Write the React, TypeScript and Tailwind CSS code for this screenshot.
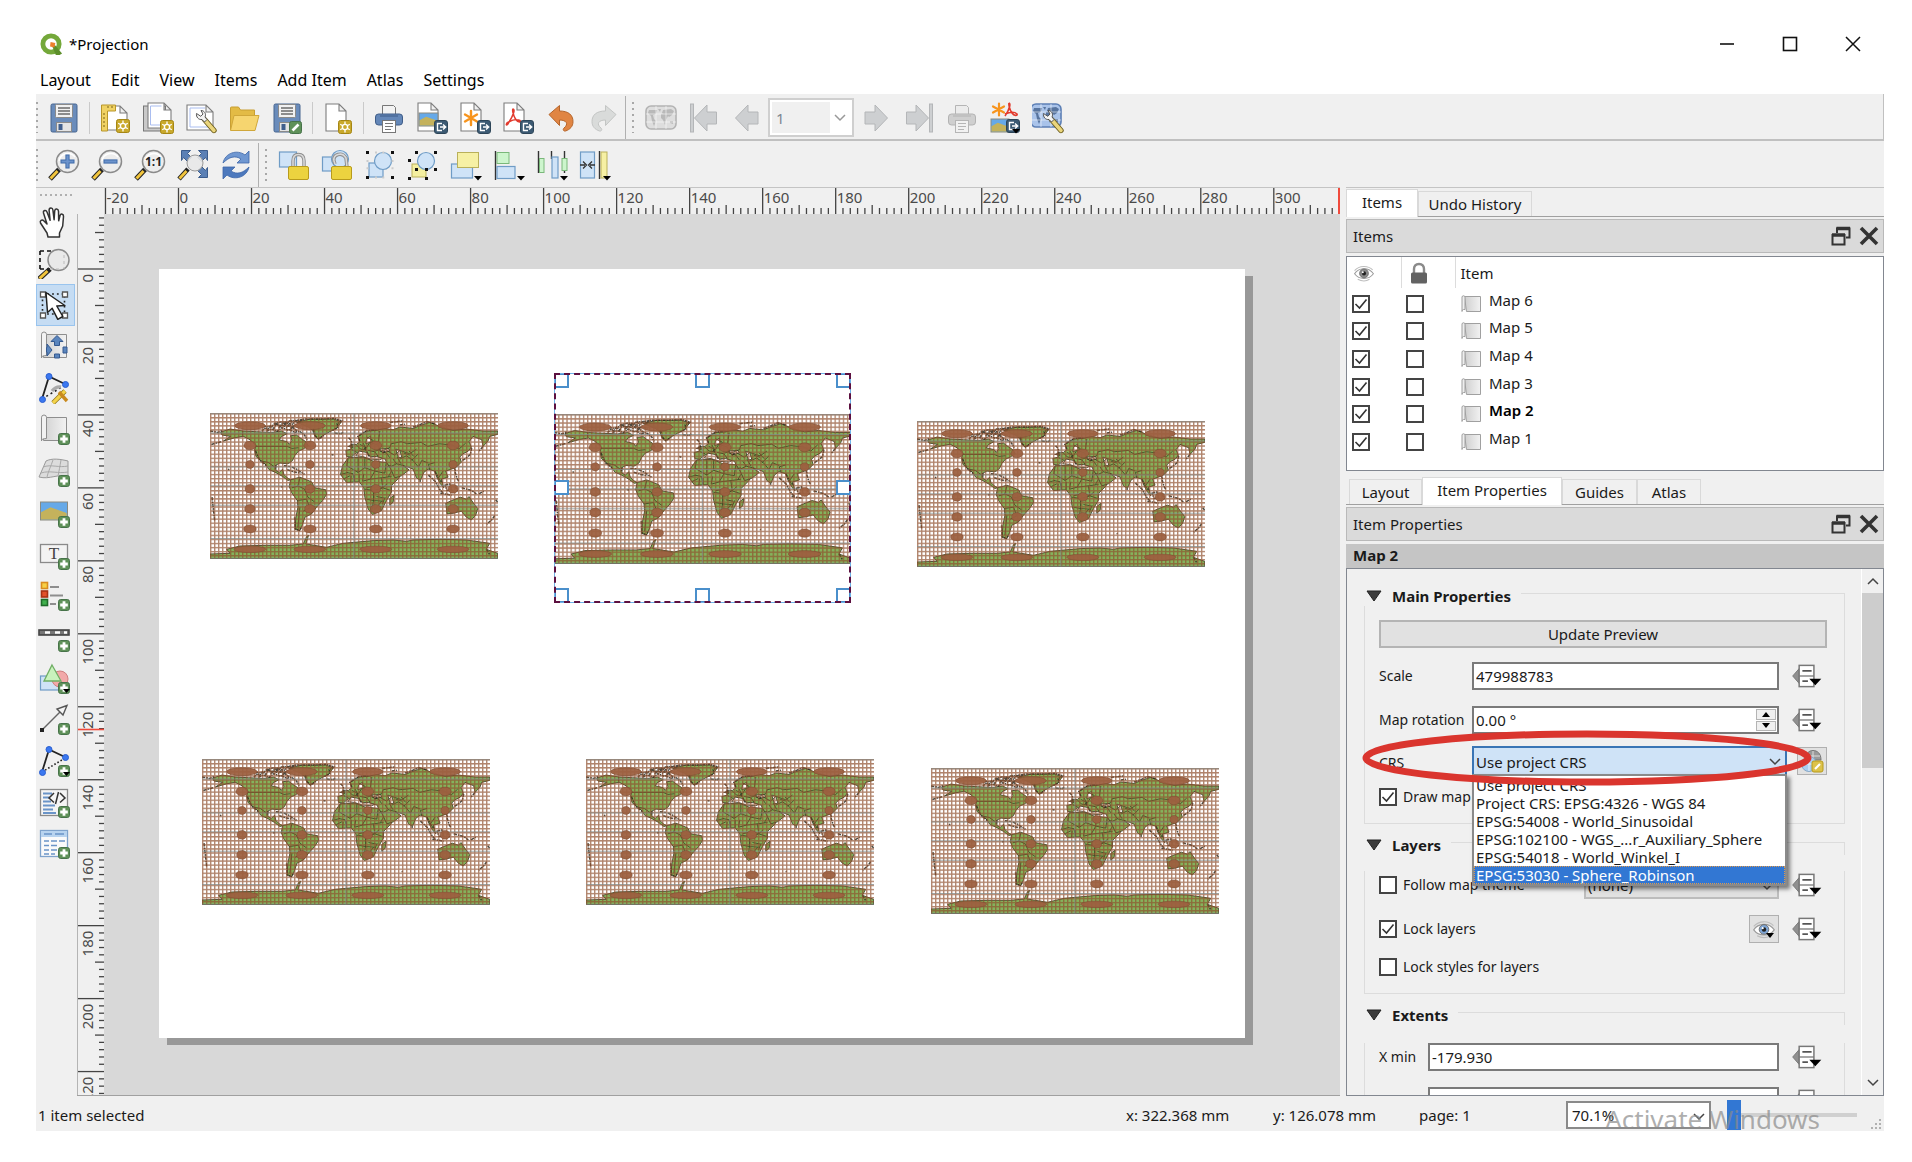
import React, { useState } from "react";

/* ---------- icon primitives ---------- */

type Kids = { children: React.ReactNode };

function Ico({ children }: Kids) {
  return (
    <svg viewBox="0 0 32 32" className="size-8" fill="none" aria-hidden="true">
      {children}
    </svg>
  );
}

const Badge = ({ x = 17, y = 18 }: { x?: number; y?: number }) => (
  <g>
    <rect x={x + 0.5} y={y + 0.5} width="13" height="13" rx="2" fill="#c9a92c" stroke="#a58614" />
    <circle cx={x + 7} cy={y + 7} r="2.6" stroke="#fff" strokeWidth="1.4" />
    <path d={`M${x + 7} ${y + 1.5}v3M${x + 7} ${y + 9.5}v3M${x + 2.2} ${y + 4.2}l2.6 1.5M${x + 9.2} ${y + 8.3}l2.6 1.5M${x + 2.2} ${y + 9.8}l2.6-1.5M${x + 9.2} ${y + 5.7}l2.6-1.5`} stroke="#fff" strokeWidth="1.3" />
  </g>
);

const Plus = ({ arrow, x = 19, y = 19 }: { arrow?: boolean; x?: number; y?: number }) => (
  <g>
    <rect x={x + 0.5} y={y + 0.5} width="11" height="11" rx="2.2" fill="#5f9159" stroke="#47734a" />
    <path d={`M${x + 6} ${y + 2.2}v7.6M${x + 2.2} ${y + 6}h7.6`} stroke="#fff" strokeWidth="2.8" />
    {arrow && <path d={`M${x + 5} ${y + 7}h7l-3.5 4z`} fill="#000" />}
  </g>
);

const ExportBadge = ({ x = 18, y = 18 }: { x?: number; y?: number }) => (
  <g>
    <rect x={x + 0.5} y={y + 0.5} width="13" height="13" rx="2.4" fill="#3c5a73" stroke="#2d4558" />
    <path d={`M${x + 8} ${y + 3.5}h-4.5v7h4.5M${x + 6} ${y + 7}h5.5M${x + 9} ${y + 4.5}l2.7 2.5-2.7 2.5`} stroke="#fff" strokeWidth="1.4" />
  </g>
);

const Doc = ({ x = 5, y = 1, w = 20, h = 28 }: { x?: number; y?: number; w?: number; h?: number }) => (
  <path d={`M${x} ${y}h${w - 7}l7 7v${h - 7}h${-w}zM${x + w - 7} ${y}v7h7`} fill="#fff" stroke="#7d7d7d" strokeWidth="1.1" />
);

const Floppy = () => (
  <g>
    <path d="M3 3.500q0-1.500 1.500-1.500h23q1.500 0 1.500 1.500v25q0 1.500-1.500 1.500h-23q-1.500 0-1.500-1.500z" fill="#6a8cbb" stroke="#47648e" />
    <rect x="7.500" y="2.500" width="17" height="13" rx="1" fill="#f1f1f1" stroke="#8a8a8a" />
    <path d="M10 6h12M10 9h12M10 12h12" stroke="#6b6b6b" strokeWidth="1.400" />
    <rect x="8.500" y="20.500" width="15" height="9" fill="#e4e4e4" stroke="#8a8a8a" />
    <rect x="10.500" y="22" width="4" height="6" fill="#3f5e8d" />
  </g>
);

const Wrench = ({ x = 0, y = 0 }: { x?: number; y?: number }) => (
  <g transform={`translate(${x} ${y})`}>
    <path d="M17.500 16.500l9.500 11" stroke="#6b5c1c" strokeWidth="5.400" strokeLinecap="round" />
    <path d="M17.500 16.500l9.500 11" stroke="#ead57c" strokeWidth="3.600" strokeLinecap="round" />
    <path d="M9.500 10.500c-.5 3.500 2 6.500 5.500 6l2.500 2.500 2.500-2.500-2-2.500c1.500-3-.5-6.500-4-6.500l2 3.500-2.200 2.300z" fill="#f4f4f4" stroke="#555" />
  </g>
);

const Printer = ({ dim }: { dim?: boolean }) => {
  const b = dim ? "#cfcfcf" : "#6487b8";
  const s = dim ? "#b3b3b3" : "#3f5d88";
  const p = dim ? "#b5b5b5" : "#777";
  return (
    <g>
      <path d="M9.500 12v-8.500h11l2 2v6.500" fill={dim ? "#ececec" : "#f3f3f3"} stroke={p} />
      <rect x="2.500" y="12" width="27" height="11" rx="3" fill={b} stroke={s} />
      <path d="M7 14h18" stroke={s} />
      <rect x="9.500" y="18.500" width="13" height="12" fill={dim ? "#f1f1f1" : "#fff"} stroke={p} />
      <path d="M12 21.500h8M12 24.500h8M12 27.500h6" stroke={p} />
    </g>
  );
};

const Lens = ({ children }: { children?: React.ReactNode }) => (
  <g>
    <path d="M2 30l9-9.500" stroke="#222" strokeWidth="5" />
    <path d="M2.500 29.500l7-7.500" stroke="#f2c53d" strokeWidth="3" />
    <circle cx="19.500" cy="12.500" r="11" fill="#ededed" stroke="#8b8b8b" strokeWidth="1.500" />
    <path d="M11 12a9 9 0 0 1 16-4" stroke="#fff" strokeWidth="1.500" />
    {children}
  </g>
);

const Landscape = ({ x, y, w, h }: { x: number; y: number; w: number; h: number }) => (
  <g>
    <rect x={x} y={y} width={w} height={h} fill="#66a9e8" stroke="#8a8a80" />
    <path d={`M${x + 0.5} ${y + h - 0.5}v${-h * 0.4}l${w * 0.35} ${-h * 0.28} ${w * 0.6} ${h * 0.32}v${h * 0.36}z`} fill="#c4b25c" />
  </g>
);

const Scroll = () => (
  <g>
    <path d="M3.500 4.500h25v23h-23z" fill="url(#paper)" stroke="#8e8e8e" />
    <path d="M3.500 4.500q0-2.500 2.500-2.500t2.500 2.500v21q-5 0-5 2.500z" fill="#f2f2f2" stroke="#8e8e8e" />
  </g>
);

const Blue = { fill: "#cfe3f7", stroke: "#6f9cc6", strokeWidth: 1.2 };
const Corner = ({ d, c = "#111" }: { d: string; c?: string }) => <path d={d} stroke={c} strokeWidth="2" strokeDasharray="2 5.300" />;
const Down = ({ x = 22, y = 27 }: { x?: number; y?: number }) => <path d={`M${x} ${y}h8l-4 4.500z`} fill="#000" />;

const Nodes = ({ dots }: { dots?: boolean }) => (
  <g>
    <path d="M4 27L11 4.500 28 12.500" stroke="#222" strokeWidth="1.800" />
    <path d="M4 27L28 12.500" stroke="#222" strokeWidth="1.600" strokeDasharray={dots ? "1.600 2" : "2 3"} />
    <g fill="#3b78f0" stroke="#2b5fd0">
      <circle cx="4.500" cy="27.500" r="3" />
      <circle cx="11" cy="4.500" r="3" />
      <circle cx="27.500" cy="12.500" r="3" />
    </g>
  </g>
);

const ArrowL = ({ flip, bar }: { flip?: boolean; bar?: boolean }) => (
  <g transform={flip ? "translate(32 0) scale(-1 1)" : undefined} fill="#cdcfd1" stroke="#b4b6b8">
    <path d={bar ? "M6.500 16L19 3v7h9.500v12h-9.500v7z" : "M4.500 16L17 3v7h10v12h-10v7z"} />
    {bar && <rect x="2.500" y="2" width="3" height="28" />}
  </g>
);

const MiniMap = ({ fill, land, stroke }: { fill: string; land: string; stroke: string }) => (
  <g>
    <rect x="1" y="4" width="30" height="23" rx="5" fill={fill} stroke={stroke} strokeWidth="1.600" />
    <path d="M4 8h8l-1 4-3 1 1 4 2 2-2 5-2-5-1-5-3-3zM13 7h3l-1 3zM16 12l4-1 3 3-2 4-1 5-2-5-2-2zM18 8l8-1 3 2-2 4-3 2-3-3-4-1zM25 19l3 0v3l-3-1z" fill={land} />
    <path d="M11 4v23M21 4v23M1 12h30M1 20h30" stroke="#fff" strokeOpacity=".55" />
  </g>
);

/* ---------- toolbar definitions ---------- */

type Tool = { label: string; art: React.ReactNode };

const fileTools: Tool[][] = [
  [{ label: "Save Project", art: <Floppy /> }],
  [
    {
      label: "New Layout",
      art: (
        <>
          <Doc x={4} y={4} w={24} h={24} />
          <path d="M2.500 3v26h6v-20h8v-6z" fill="#f0d264" stroke="#b8962a" />
          <path d="M4 12h2M4 16h2M4 20h2M4 24h2M9 4v2M13 4v2" stroke="#7a6216" />
          <Badge x={17} y={17} />
        </>
      ),
    },
    {
      label: "Duplicate Layout",
      art: (
        <>
          <rect x="1.500" y="4" width="22" height="25" fill="#c9c9c9" stroke="#777" />
          <Doc x={6} y={1} w={23} h={25} />
          <path d="M8.500 4h11M8.500 4v19h17" stroke="#a9bdf0" />
          <Badge x={18} y={18} />
        </>
      ),
    },
    {
      label: "Layout Manager",
      art: (
        <>
          <Doc x={2} y={3} w={26} h={25} />
          <path d="M5 6h15M5 6v19h20" stroke="#a9bdf0" />
          <Wrench x={2} y={1} />
        </>
      ),
    },
    {
      label: "Add Items from Template",
      art: (
        <>
          <path d="M2.500 28v-22q0-1 1-1h7l2 3h14v5" fill="#e3bb45" stroke="#c89f33" />
          <path d="M2.500 28.500l3.500-15h25l-4 15z" fill="#f6d56f" stroke="#d0a73a" />
        </>
      ),
    },
    {
      label: "Save as Template",
      art: (
        <>
          <Floppy />
          <rect x="18.500" y="19.500" width="12" height="12" rx="2" fill="#5f9159" stroke="#47734a" />
          <path d="M21.500 28.500l6-6" stroke="#fff" strokeWidth="2.600" />
        </>
      ),
    },
  ],
  [
    {
      label: "Add Pages",
      art: (
        <>
          <Doc x={4} y={2} w={20} h={27} />
          <Badge x={16} y={18} />
        </>
      ),
    },
  ],
  [
    { label: "Print Layout", art: <Printer /> },
    {
      label: "Export as Image",
      art: (
        <>
          <Doc x={2} y={1} w={20} h={28} />
          <Landscape x={3} y={11} w={19} h={13} />
          <ExportBadge />
        </>
      ),
    },
    {
      label: "Export as SVG",
      art: (
        <>
          <Doc x={2} y={1} w={20} h={28} />
          <path d="M12 9v14M6 12.500l12 7M18 12.500l-12 7" stroke="#f7941d" strokeWidth="2.400" strokeLinecap="round" />
          <ExportBadge />
        </>
      ),
    },
    {
      label: "Export as PDF",
      art: (
        <>
          <Doc x={2} y={1} w={20} h={28} />
          <path d="M11 7c2 0 1.500 5-5.500 15.500-1.500 1.500-2-1 1-2.500 5-2.500 9-3 11.500-1.500 2.500 2-2 2.500-4.500-1.500-2.500-4-3.500-10-2.500-10z" stroke="#e23b2e" strokeWidth="1.500" />
          <ExportBadge />
        </>
      ),
    },
    {
      label: "Undo",
      art: <path d="M4 12.500L14.500 3.500v5.500c9 0 13.500 4 13.500 10.500 0 5-3 8-7.500 9.500-2 .5-3-1.500-1.500-3 5-4 2.500-8-4.500-8v5.500z" fill="#e08543" stroke="#b5652b" />,
    },
    {
      label: "Redo",
      art: <path d="M28 12.500L17.500 3.500v5.500c-9 0-13.500 4-13.500 10.500 0 5 3 8 7.500 9.500 2 .5 3-1.500 1.500-3-5-4-2.500-8 4.500-8v5.500z" fill="#d9dbda" stroke="#c3c5c4" />,
    },
  ],
];

const atlasBefore: Tool[] = [
  { label: "Preview Atlas", art: <MiniMap fill="#dedede" land="#b9b9b9" stroke="#b3b3b3" /> },
  { label: "First Feature", art: <ArrowL bar /> },
  { label: "Previous Feature", art: <ArrowL /> },
];
const atlasAfter: Tool[] = [
  { label: "Next Feature", art: <ArrowL flip /> },
  { label: "Last Feature", art: <ArrowL flip bar /> },
  { label: "Print Atlas", art: <Printer dim /> },
  {
    label: "Export Atlas",
    art: (
      <>
        <path d="M10 1.500v12M4 4.500l11 6M15 4.500l-11 6" stroke="#f7941d" strokeWidth="2.200" strokeLinecap="round" />
        <path d="M20 1c1.500 0 1.500 5-4 13M16 12c5-2 10-2 12 0 1 2-3 2-5-1-2.500-3-3.500-9-3-10" stroke="#e23b2e" strokeWidth="1.600" />
        <Landscape x={2} y={17} w={18} h={13} />
        <ExportBadge x={17} y={17} />
        <path d="M23 27h8l-4 4.500z" fill="#000" />
      </>
    ),
  },
  {
    label: "Atlas Settings",
    art: (
      <>
        <g transform="translate(-2 -2)">
          <MiniMap fill="#a9c3ea" land="#57749f" stroke="#5c7fb5" />
        </g>
        <Wrench x={2} y={1} />
      </>
    ),
  },
];

const zoomTools: Tool[] = [
  {
    label: "Zoom In",
    art: (
      <Lens>
        <path d="M19.500 5.500v14M12.500 12.500h14" stroke="#3f6aa8" strokeWidth="4.200" />
        <path d="M19.500 6.500v12M13.500 12.500h12" stroke="#6c93cc" strokeWidth="2.200" />
      </Lens>
    ),
  },
  {
    label: "Zoom Out",
    art: (
      <Lens>
        <path d="M12.500 12.500h14" stroke="#3f6aa8" strokeWidth="4.200" />
        <path d="M13.500 12.500h12" stroke="#6c93cc" strokeWidth="2.200" />
      </Lens>
    ),
  },
  {
    label: "Zoom to 100%",
    art: (
      <Lens>
        <text x="19.500" y="17" textAnchor="middle" fill="#222" className="font-['Open_Sans'] text-[12px] font-bold">1:1</text>
      </Lens>
    ),
  },
  {
    label: "Zoom Full",
    art: (
      <>
        <g fill="#5b80b5" stroke="#3b5c8c">
          <path d="M4.500 1.500h9l-3 3 4 4-4 4-4-4-2 3zM30.500 1.500h-9l3 3-4 4 4 4 4-4 2 3zM30.500 28.500h-9l3-3-4-4 4-4 4 4 2-3z" />
        </g>
        <path d="M2 30l9-10" stroke="#222" strokeWidth="4.600" />
        <path d="M2.500 29.500l7-7.500" stroke="#f2c53d" strokeWidth="2.800" />
        <circle cx="18" cy="14" r="8" fill="#e8e8e8" fillOpacity=".9" stroke="#999" />
      </>
    ),
  },
  {
    label: "Refresh View",
    art: (
      <g stroke="#3c66a8" strokeWidth=".8">
        <path d="M3 14C5 4 17 0 25 6l4-4v12h-12l4-4C15 6 9 8 3 14z" fill="#6f97d1" />
        <path d="M29 18C27 28 15 32 7 26l-4 4v-12h12l-4 4C17 26 23 24 29 18z" fill="#4d79bd" />
      </g>
    ),
  },
];

const Shackle = ({ open }: { open?: boolean }) => (
  <g>
    <path d={open ? "M14 15l-1-3q-1-5 4-6.500t8 3.500l1 9" : "M15 18v-6q0-6.500 5.500-6.500t5.500 6.500v6"} stroke="#8c8c8c" strokeWidth="3.400" />
    <path d={open ? "M14 15l-1-3q-1-5 4-6.500t8 3.500l1 9" : "M15 18v-6q0-6.500 5.500-6.500t5.500 6.500v6"} stroke="#d9d9d9" strokeWidth="1.600" />
    <rect x="10.500" y="17.500" width="20" height="13" rx="1.500" fill="#ecd33f" stroke="#b89b1c" />
  </g>
);

const itemTools: Tool[] = [
  {
    label: "Lock Selected Items",
    art: (
      <>
        <rect x="1.500" y="3" width="17" height="15" {...Blue} />
        <Shackle />
      </>
    ),
  },
  {
    label: "Unlock All Items",
    art: (
      <>
        <rect x="1.500" y="8" width="14" height="14" {...Blue} />
        <circle cx="19" cy="10" r="8.500" {...Blue} />
        <Shackle open />
      </>
    ),
  },
  {
    label: "Group Items",
    art: (
      <>
        <rect x="5" y="14" width="14" height="14" {...Blue} />
        <circle cx="19" cy="12" r="8.500" {...Blue} />
        <path d="M2 2h3v3h-3zM27 2h3v3h-3zM2 27h3v3h-3zM27 27h3v3h-3z" fill="#111" />
        <Corner d="M11 3.500h14M3.500 11v14M28.500 11v14M11 28.500h14" c="#ccc" />
      </>
    ),
  },
  {
    label: "Ungroup Items",
    art: (
      <>
        <rect x="5" y="15" width="14" height="13" fill="#f4efa0" stroke="#b9b05a" />
        <circle cx="19" cy="12" r="8.500" {...Blue} />
        <path d="M8 2h3v3h-3zM27 2h3v3h-3zM1 10h3v3h-3zM1 28h3v3h-3zM18 28h3v3h-3zM27 19h3v3h-3zM8 19h3v3h-3zM18 19h3v3h-3z" fill="#111" />
      </>
    ),
  },
  {
    label: "Raise Items",
    art: (
      <>
        <rect x="1.500" y="15" width="21" height="14" {...Blue} />
        <rect x="7.500" y="3.500" width="21" height="15" fill="#f6f0a4" stroke="#b9b05a" />
        <Down x={24} y={27} />
      </>
    ),
  },
  {
    label: "Align Items",
    art: (
      <>
        <path d="M2.500 2v29" stroke="#333" strokeWidth="1.400" />
        <rect x="4" y="3.500" width="12" height="11" fill="#cdf5cd" stroke="#7ab87a" />
        <rect x="4" y="17.500" width="18" height="12" {...Blue} />
        <Down x={24} y={27} />
      </>
    ),
  },
  {
    label: "Distribute Items",
    art: (
      <>
        <path d="M2.500 2v22M15.500 2v8M28.500 2v22" stroke="#333" strokeWidth="1.400" />
        <rect x="3.500" y="9.500" width="4.500" height="14" fill="#cdf5cd" stroke="#7ab87a" />
        <rect x="16" y="8" width="6" height="21" {...Blue} />
        <rect x="26" y="9.500" width="5" height="12" fill="#cdf5cd" stroke="#7ab87a" />
        <Down x={24} y={27} />
      </>
    ),
  },
  {
    label: "Resize Items",
    art: (
      <>
        <rect x="1.500" y="3" width="14" height="26" {...Blue} />
        <path d="M1 16h5M16 16h-5M4 12.500l3.500 3.500-3.500 3.500M13 12.500l-3.500 3.500 3.500 3.500" stroke="#333" strokeWidth="1.300" />
        <path d="M20.500 2v28" stroke="#333" strokeWidth="1.400" />
        <rect x="22" y="3" width="6" height="26" fill="#f6f0a4" stroke="#b9b05a" />
        <Down x={24} y={27} />
      </>
    ),
  },
];

const sideTools: Tool[] = [
  {
    label: "Pan Layout",
    art: (
      <path d="M10 31l-1-4-6.500-10c-1-2.500 1.500-4 3.500-2l3 3-3.500-11c-.5-2.700 2.500-3.500 3.600-.8l3 8-1-10c0-2.700 3.400-3 3.800-.2l1.200 9.700.6-8.800c.5-2.700 3.700-2.300 3.800.5l.2 9.300 1.300-5.200c.9-2.400 3.800-1.500 3.500 1l-.8 9.500-3.200 7v4z" fill="#fff" stroke="#333" strokeWidth="1.500" strokeLinejoin="round" />
    ),
  },
  {
    label: "Zoom",
    art: (
      <>
        <path d="M2 4h14M2 4v18M2 22h10" stroke="#111" strokeWidth="1.600" strokeDasharray="4 3" />
        <path d="M1 32l11-10" stroke="#222" strokeWidth="5" />
        <path d="M1.500 31.500l8-7.500" stroke="#f2c53d" strokeWidth="3" />
        <circle cx="20.500" cy="13" r="10.500" fill="#e9e9e9" stroke="#8b8b8b" strokeWidth="1.500" />
        <path d="M26 8v14M12 22h12" stroke="#bbb" strokeDasharray="3 3" />
      </>
    ),
  },
  {
    label: "Select/Move Item",
    art: (
      <>
        <path d="M4.500 5h22v20h-22z" stroke="#222" strokeWidth="1.600" strokeDasharray="1.800 3" />
        <path d="M2.500 3h5v5h-5zM24.500 3h5v5h-5zM2.500 24h5v5h-5zM24.500 24h5v5h-5z" fill="#fff" stroke="#555" strokeWidth="1.300" />
        <path d="M8 3.500l1.500 20 4.700-4.200 5.600 11 5-2.800-6-10.500 8-.5z" fill="#fff" stroke="#222" strokeWidth="1.500" strokeLinejoin="round" />
      </>
    ),
  },
  {
    label: "Move Item Content",
    art: (
      <>
        <Scroll />
        <g fill="#5a85bd" stroke="#34598f">
          <path d="M19 5.500l6 6h-3.500v4h-5v-4h-3.500zM9 14l5 6-5 6v-4h-0.500v-4.500h.5zM29 17h-4v6h4zM16.500 24h5v4h-5z" />
        </g>
      </>
    ),
  },
  {
    label: "Edit Nodes Item",
    art: (
      <>
        <Nodes />
        <path d="M15 31l12-12" stroke="#8f7412" strokeWidth="4.600" />
        <path d="M15 31l12-12" stroke="#f3d34a" strokeWidth="3.200" />
        <path d="M14 19q4-5 9-4" stroke="#aaa" strokeWidth="3.400" />
        <path d="M21 20l8 9" stroke="#c98a1e" strokeWidth="3.400" />
      </>
    ),
  },
  { label: "Add Map", art: <><Scroll /><Plus x={20} y={20} /></> },
  {
    label: "Add 3D Map",
    art: (
      <>
        <path d="M8 6c6-3 14-2 22 0v16c-10-4-18 3-29 0z" fill="#dcdcdc" stroke="#9a9a9a" />
        <path d="M5 12c8-3 16 1 25-1M3 18c9-3 17 1 27-1M15 5c-2 6-5 12-6 17M23 5c-1 6-2 11-3 16" stroke="#a9a9a9" />
        <Plus x={20} y={20} />
      </>
    ),
  },
  { label: "Add Picture", art: <><Landscape x={2.5} y={6} w={27} h={18} /><Plus x={20} y={20} /></> },
  {
    label: "Add Label",
    art: (
      <>
        <rect x="2.500" y="6.500" width="27" height="18" fill="#f3f3f3" stroke="#8a8a8a" strokeWidth="1.300" />
        <text x="16" y="21" textAnchor="middle" fill="#444" className="font-['Liberation_Serif'] text-[17px]">T</text>
        <Plus x={20} y={20} />
      </>
    ),
  },
  {
    label: "Add Legend",
    art: (
      <>
        <rect x="3.500" y="3.500" width="6" height="6" fill="#f7d046" stroke="#d98c1f" strokeWidth="1.600" />
        <rect x="3.500" y="12" width="6" height="6" fill="#e2512b" stroke="#a83214" strokeWidth="1.600" />
        <rect x="3.500" y="20.500" width="6" height="6" fill="#3fb04c" stroke="#1f6b2a" strokeWidth="1.600" />
        <path d="M12 8h9M12 16.500h13M12 25h6" stroke="#8e8e8e" strokeWidth="2" />
        <Plus x={20} y={20} />
      </>
    ),
  },
  {
    label: "Add Scale Bar",
    art: (
      <>
        <rect x="1" y="9" width="30" height="5" fill="#777" stroke="#444" strokeWidth="1.600" />
        <path d="M7 11.500h5M17 11.500h5M26 11.500h3" stroke="#fff" strokeWidth="2.400" />
        <Plus x={20} y={19} />
      </>
    ),
  },
  {
    label: "Add Shape",
    art: (
      <>
        <rect x="2.500" y="14" width="19" height="14" {...Blue} />
        <circle cx="22" cy="17" r="8" fill="#f2a9a9" stroke="#cf7f7f" />
        <path d="M14 3l9 16h-17z" fill="#c9f2bd" stroke="#6fae64" strokeWidth="1.300" />
        <Plus arrow x={20} y={20} />
      </>
    ),
  },
  {
    label: "Add Arrow",
    art: (
      <>
        <path d="M4 26L26 4" stroke="#666" strokeWidth="1.500" />
        <path d="M29 1.500l-10 3.500 6 6z" fill="#f4f4f4" stroke="#555" strokeWidth="1.400" />
        <rect x="2" y="24" width="4" height="4" fill="#222" />
        <Plus x={20} y={19} />
      </>
    ),
  },
  { label: "Add Node Item", art: <><Nodes dots /><Plus arrow x={20} y={20} /></> },
  {
    label: "Add HTML",
    art: (
      <>
        <rect x="2.500" y="2.500" width="27" height="26" fill="#f5f5f5" stroke="#8a8a8a" strokeWidth="1.300" />
        <path d="M5 6.500h9M5 10.500h6M5 14.500h8M5 18.500h12M5 22.500h10M5 26h13" stroke="#6a94c8" strokeWidth="1.800" />
        <path d="M16 6l-5 5 5 4.500M22 6l5 5-5 4.500M20.500 5l-3 12" stroke="#333" strokeWidth="1.500" />
        <Plus x={20} y={19} />
      </>
    ),
  },
  {
    label: "Add Attribute Table",
    art: (
      <>
        <rect x="2.500" y="2.500" width="27" height="26" fill="#fafafa" stroke="#7fa3cc" strokeWidth="1.300" />
        <rect x="3" y="3" width="26" height="6" fill="#b7d3ef" />
        <path d="M6 6h8M17 6h9M6 13h5M13 13h6M21 13h6M6 17.500h5M13 17.500h6M6 22h5M13 22h6M6 26h5M13 26h4" stroke="#6a94c8" strokeWidth="1.600" />
        <Plus x={20} y={19} />
      </>
    ),
  },
];

/* ---------- small controls ---------- */

const Btn = ({ t }: { t: Tool }) => (
  <button type="button" aria-label={t.label} title={t.label} className="grid h-full w-[43px] shrink-0 place-items-center">
    <Ico>{t.art}</Ico>
  </button>
);

const Grip = ({ wide }: { wide?: boolean }) => (
  <span className={wide ? "flex w-[13px] shrink-0 justify-center py-1.5" : "flex w-1.5 shrink-0 py-1.5"}>
    <span className="w-0.5 bg-[repeating-linear-gradient(to_bottom,#a8a8a8_0_2px,transparent_2px_6px)]" />
  </span>
);

const Sep = () => <span className="flex h-8 w-2 shrink-0 justify-center"><span className="w-px bg-[#cacaca]" /></span>;

const Chevron = ({ className }: { className: string }) => (
  <svg viewBox="0 0 12 8" className={className} fill="none" aria-hidden="true">
    <path d="M1 1l5 5 5-5" stroke="currentColor" strokeWidth="1.500" />
  </svg>
);

function Check({ label, on = false, text }: { label: string; on?: boolean; text?: boolean }) {
  const [v, setV] = useState(on);
  return (
    <label className="inline-flex items-center gap-1.5 whitespace-nowrap text-sm">
      <span className="grid size-[18px] place-items-center border-2 border-[#444] bg-white">
        <input type="checkbox" aria-label={label} checked={v} onChange={() => setV(!v)} className="col-start-1 row-start-1 size-3.5 appearance-none" />
        {v && (
          <svg viewBox="0 0 14 14" className="pointer-events-none col-start-1 row-start-1 size-3.5" fill="none" aria-hidden="true">
            <path d="M1.500 7l4 4 7-8.500" stroke="#333" strokeWidth="1.600" />
          </svg>
        )}
      </span>
      {text && <span>{label}</span>}
    </label>
  );
}

const Override = ({ label }: { label: string }) => (
  <button type="button" aria-label={label} className="ml-3 mr-1 shrink-0">
    <svg viewBox="0 0 33 26" className="h-6 w-8" fill="none" aria-hidden="true">
      <path d="M8 5v16l-7-8z" fill="#909090" stroke="#777" />
      <rect x="8" y="1.500" width="16" height="23" fill="#fff" stroke="#777" strokeWidth="1.600" />
      <path d="M11.500 7.500h10M11.500 18.500h6" stroke="#555" strokeWidth="1.800" />
      <path d="M8 13h16" stroke="#777" strokeWidth="1.400" />
      <path d="M19 16h13l-6.500 7z" fill="#000" />
    </svg>
  </button>
);

const Eye = ({ iris, className }: { iris: string; className: string }) => (
  <svg viewBox="0 0 28 24" className={className} fill="none" aria-hidden="true">
    <path d="M2 13C7 5 20 4 26 13 20 21 8 21 2 13z" fill="#fff" stroke="#9a9a9a" strokeWidth="1.300" />
    <path d="M2 9C8 2 19 2 25 8M6 20c5 2.500 11 2.500 15 0" stroke="#bdbdbd" strokeWidth="1.300" />
    <circle cx="14" cy="12.500" r="5.600" fill={iris} stroke="#666" />
    <circle cx="14" cy="12.500" r="2.600" fill="#222" />
    <circle cx="12.500" cy="11" r="1.200" fill="#fff" />
  </svg>
);

const DockHeader = ({ title }: { title: string }) => (
  <div className="flex h-[34px] shrink-0 items-center border border-[#b9b9b9] bg-[#dadada] pl-1.5 pr-1">
    <h2 className="flex-1">{title}</h2>
    <button type="button" aria-label="Float panel" className="mr-2">
      <svg viewBox="0 0 20 20" className="size-5" fill="none" stroke="#333" aria-hidden="true">
        <path d="M6 7V2.500h12.500v9H15" strokeWidth="2" />
        <path d="M5.500 2.500h13.500" strokeWidth="3.500" />
        <rect x="1.500" y="9" width="12" height="9.500" strokeWidth="2" />
        <path d="M1 9h13" strokeWidth="3.500" />
      </svg>
    </button>
    <button type="button" aria-label="Close panel">
      <svg viewBox="0 0 20 20" className="size-5" fill="none" aria-hidden="true">
        <path d="M2 2l16 16M18 2L2 18" stroke="#333" strokeWidth="3.600" />
      </svg>
    </button>
  </div>
);

const Tab = ({ label, active, width }: { label: string; active?: boolean; width: string }) => (
  <button
    type="button"
    role="tab"
    aria-selected={!!active}
    className={`${width} shrink-0 border border-b-0 border-[#d9d9d9] ${active ? "-mb-px h-7 bg-white pb-1" : "h-[25px] bg-[#f0f0f0]"}`}
  >
    {label}
  </button>
);

/* ---------- rulers ---------- */

const MM = 3.651;

function TopRuler() {
  const ticks = Array.from({ length: 169 }, (_, i) => i * 2 - 20);
  return (
    <div className="h-[27px] overflow-hidden border-t border-[#c4c4c4] bg-[#f0f0f0]">
      <svg className="h-[26px] w-full" aria-hidden="true">
        {ticks.map((v) => {
          const x = 101.5 + v * MM;
          const top = v % 20 === 0 ? 0 : v % 10 === 0 ? 17 : 20;
          return (
            <g key={v}>
              <path d={`M${x} ${top}V26`} stroke="#444" strokeWidth="1.300" />
              {v % 20 === 0 && <text x={x + 1} y="15" fill="#4a4a4a" className="text-[15px]">{v}</text>}
            </g>
          );
        })}
        <rect x="100%" y="0" width="2" height="27" transform="translate(-2 0)" fill="#f04a3c" />
      </svg>
    </div>
  );
}

function SideRuler() {
  const ticks = Array.from({ length: 130 }, (_, i) => i * 2 - 14);
  return (
    <div className="w-[27px] shrink-0 overflow-hidden border-l border-[#b4b4b4] bg-[#f0f0f0]">
      <svg className="h-full w-[26px]" aria-hidden="true">
        {ticks.map((v) => {
          const y = 55 + v * 3.648;
          const left = v % 20 === 0 ? 0 : v % 10 === 0 ? 17 : 21;
          return (
            <g key={v}>
              <path d={`M${left} ${y}H26`} stroke="#444" strokeWidth="1.300" />
              {v % 20 === 0 && (
                <text transform={`translate(15 ${y + 5}) rotate(-90)`} textAnchor="end" fill="#4a4a4a" className="text-[15px]">
                  {v}
                </text>
              )}
            </g>
          );
        })}
        <path d="M0 515.500H26" stroke="#f04a3c" strokeWidth="1.600" />
      </svg>
    </div>
  );
}

/* ---------- world map ---------- */

const land = [
  "M62 95L90 86 130 92 170 94 215 96 245 92 262 100 245 108 238 118 262 124 268 132 276 120 272 106 290 104 300 112 318 124 325 136 310 146 296 152 285 165 278 180 268 188 262 190 240 188 228 194 228 210 238 216 248 206 252 222 262 232 272 238 264 240 248 228 225 215 208 208 195 190 182 180 168 168 164 148 168 136 150 118 130 108 105 112 70 122 92 108 66 104z",
  "M290 66L330 56 400 56 425 64 410 84 390 94 372 104 355 116 345 108 338 90 325 80z",
  "M272 238L300 230 335 244 345 262 378 268 380 282 368 300 350 320 335 340 315 350 308 372 300 390 285 386 288 350 294 320 292 300 275 276 268 258z",
  "M428 196L445 172 490 170 520 182 560 186 572 200 582 216 606 212 598 232 575 255 575 275 560 300 545 330 518 342 505 325 495 290 492 262 478 244 440 246 422 222z",
  "M570 294L583 284 580 305 570 314z",
  "M440 168L438 150 455 146 450 134 470 132 480 124 475 108 500 92 530 90 550 84 580 88 600 80 640 84 660 76 690 66 720 78 760 90 800 86 850 92 894 92 894 102 870 108 865 122 850 138 846 118 820 108 808 124 815 140 806 152 790 160 780 170 785 185 770 200 755 206 738 212 745 230 725 236 732 262 722 250 712 232 705 212 685 206 672 216 662 240 650 232 640 206 625 200 610 196 628 208 605 226 585 232 570 200 560 186 556 176 540 172 520 168 510 172 500 160 480 152 465 160 455 170z",
  "M738 308L752 302 766 296 782 290 800 296 808 288 820 306 834 324 828 344 815 358 800 350 785 332 760 338 742 340z",
  "M30 474L30 460 90 458 80 446 120 436 200 434 270 434 310 430 320 408 326 404 318 430 380 440 430 428 520 420 580 418 620 422 640 418 720 416 800 418 870 428 860 446 894 458 894 474z",
];

const seas = [
  "M478 152L500 156 512 170 530 168 548 174 540 178 512 176 488 168 468 166z",
  "M536 146L566 144 570 152 548 156z",
  "M588 146L600 150 606 170 596 172z",
  "M500 116L512 108 514 124 498 130z",
];

const borders =
  "M166 138H262l14 6 20-2M185 182l20 4 14 10 8 6M128 92v14M300 232l-6 24 20 10 10 24 20 14M276 262l20-6M292 300l28-4 10 26-20 10M300 320l-6 60M318 268l26-4M445 172l-4 24 34 20v-44M475 216l20-14V172M495 202l30 10v-30M525 212l30 6 4-30M525 212l-14 24-22 6M545 232l30-4M511 236l34-4 4 30-28 8-26-4M549 262l24 8M521 270v30l30 2M500 296l21 4-4 26M440 216l20 4 4 24M478 220v24M545 302l-18 24M422 222l22-6M480 132l20 10 10-16 24 8 10 18 26-10 4-12 30-6 20 6 40-4 20 12 34-8 40 4 20 12 20-18M560 150l24 14 16-14 30 10 20-14M600 176l20-10 20 14 16 20 10-20 20 8M656 160l-20 20M570 200l20-10 24 6M590 190l-10-14M500 110l20 10-6 20M540 92l-4 30M690 206l-4-14 20-6M716 232l14-20M540 152l20 6 10 14M505 150l20 4 10 14M456 148l14 6M470 134l12 12 14 2M490 128l8 16M512 134l14-8 14 4M526 152l14-4M430 236l20-10M452 246l2-20M464 242l0-18M488 242l4-22M500 262l24-6M534 270l14-10M530 288l22 4M556 290l-8 20M562 250l-14 12M566 228l8-14M560 200l14-6M604 190l-12-20M612 158l18 6M628 152l14 16";

const arctic =
  "M186 92l10-10 8 6 8-12 10 8 8-14 12 8 6-12 10 8 12-14 10 8 10-10 12 8M192 78l20 2 10-8 24 4 14-8 20 4M200 92l14-6 18 6 14-10 20 8 12-8 14 10M222 70l24-6 16 2 14-6 20 4 14-6M236 82l10-8 14 6 8-8 14 10M262 76l12 4 14-6 14 8M270 88l14 8 14-4 16 12 8 14M284 62l30-6 50 0 40-2 22 8-14 8 2 12-16 8";

const islands =
  "M340 84l6 22 10 10 16-10M30 92l24 4 14-6M34 132l30-8M446 112l8 8 2 14-8 4 12 2M404 98l20 2 6-4M480 122l-6-14 14-10 14-8 28-2M570 66l40-4M600 74l16-2M640 80l22-8 20-8 24 6M816 142l-4 20-14 12-10 6M850 138l-12 14M764 202l4 12M766 214l6 20 6 10M686 224l20 18 16 28 10 8M722 278l34 6M736 254l14-4 6 18-14 2zM766 256l8 18M786 262l30 8 14 10M838 280l14-8M885 345l-8 12-16 14M284 350l2 34 12 6 6-8M262 208l20 6 20 4M276 200l14 6 24 16M36 290l8 70M252 196l20 2M860 446l10 16M660 240l2 4M888 298l6 6M84 206l4 2M244 258l4 2M395 162l6 2M630 374l2 2M705 212l14 26 10 8M556 152l-10 8M494 142l8 14 6 12M166 150l14 30 20 16M228 194l-2 12";

const circleCols = [150, 330, 528, 760];
const circleRows = [
  [76, 46, 12],
  [135, 18, 13],
  [192, 13, 12],
  [265, 15, 13],
  [325, 16, 13],
  [385, 19, 12],
  [446, 48, 10],
];

function WorldMap({ className }: { className: string }) {
  return (
    <svg viewBox="30 38 865 437" preserveAspectRatio="none" className={className} role="img" aria-label="World map">
      <rect x="30" y="38" width="865" height="437" fill="#fff" />
      <g fill="#84b35c" stroke="#3b3a22" strokeWidth="2.500" strokeLinejoin="round">
        {land.map((d) => (
          <path key={d} d={d} />
        ))}
      </g>
      <g fill="#fff" stroke="#3b3a22" strokeWidth="2.500">
        {seas.map((d) => (
          <path key={d} d={d} />
        ))}
      </g>
      <path d={borders} fill="none" stroke="#35401f" strokeWidth="2.800" strokeOpacity=".85" />
      <g fill="none" stroke="#2e2a1e" strokeOpacity=".85">
        <path d={arctic} strokeWidth="4.500" strokeDasharray="8 2 4 2" />
        <path d={islands} strokeWidth="4.500" strokeDasharray="10 3 5 2" />
      </g>
      <rect x="30" y="38" width="865" height="437" fill="url(#graticule)" />
      <path d="M30 40H895M30 98H895M30 200H895M30 256H895M30 314H895M30 414H895M462 38V475M30 473H895" stroke="#7f8b8c" strokeWidth="3" strokeOpacity=".7" />
      <g fill="#9c6040" stroke="#7a4a30" strokeWidth="1.500" fillOpacity=".94">
        {circleRows.flatMap(([cy, rx, ry]) => circleCols.map((cx) => <ellipse key={`${cx}-${cy}`} cx={cx} cy={cy} rx={rx} ry={ry} />))}
      </g>
    </svg>
  );
}

const Handle = ({ className }: { className: string }) => <span className={`absolute size-[15px] border-2 border-[#4a8fcb] bg-white ${className}`} />;

function Canvas() {
  return (
    <div className="relative min-w-0 flex-1 overflow-hidden bg-[#d8d8d8]">
      <svg className="absolute size-0" aria-hidden="true">
        <defs>
          <pattern id="graticule" x="30" y="38" width="12.014" height="12.140" patternUnits="userSpaceOnUse">
            <path d="M0 2H12.100M2 0V12.200" stroke="#8f4f2c" strokeWidth="4" strokeOpacity=".7" />
          </pattern>
          <linearGradient id="paper" x1="0" x2="1">
            <stop offset="0" stopColor="#cfcfcf" />
            <stop offset="1" stopColor="#f2f2f2" />
          </linearGradient>
        </defs>
      </svg>
      <div className="absolute left-[55px] top-[55px] h-[769px] w-[1086px] bg-white shadow-[8px_7px_0_#989898]">
        <WorldMap className="absolute left-[51px] top-[144px] h-[146px] w-[288px]" />
        <div className="absolute left-[395px] top-[104px] h-[230px] w-[297px]">
          <WorldMap className="absolute left-0 top-[41px] h-[150px] w-[297px]" />
          <Handle className="left-0 top-0" />
          <Handle className="left-[141px] top-0" />
          <Handle className="right-0 top-0" />
          <Handle className="left-0 top-[107px]" />
          <Handle className="right-0 top-[107px]" />
          <Handle className="bottom-0 left-0" />
          <Handle className="bottom-0 left-[141px]" />
          <Handle className="bottom-0 right-0" />
          <span className="absolute inset-0 border border-[#6fb2e8]" />
          <span className="absolute inset-0 border-2 border-dashed border-[#5c1040]" />
        </div>
        <WorldMap className="absolute left-[758px] top-[152px] h-[146px] w-[288px]" />
        <WorldMap className="absolute left-[43px] top-[490px] h-[146px] w-[288px]" />
        <WorldMap className="absolute left-[427px] top-[490px] h-[146px] w-[288px]" />
        <WorldMap className="absolute left-[772px] top-[499px] h-[146px] w-[288px]" />
      </div>
    </div>
  );
}

/* ---------- right docks ---------- */

function ItemsDock() {
  return (
    <section className="flex shrink-0 flex-col">
      <div role="tablist" className="flex h-[29px] items-end border-b border-[#a0a0a0]">
        <Tab label="Items" active width="w-[72px]" />
        <Tab label="Undo History" width="w-[114px]" />
      </div>
      <div className="mt-0.5 flex flex-col">
        <DockHeader title="Items" />
      </div>
      <div className="mt-[3px] h-[215px] border border-[#828790] bg-white">
        <table className="h-[197px] w-full table-fixed border-collapse text-left">
          <thead>
            <tr className="h-[31px]">
              <th className="w-[54px] border-r border-[#dcdcdc] pl-1.5" aria-label="Visible">
                <Eye iris="#8a8a8a" className="h-5 w-[22px]" />
              </th>
              <th className="w-[54px] border-r border-[#dcdcdc] pl-2" aria-label="Locked">
                <svg viewBox="0 0 18 22" className="h-[22px] w-[18px]" fill="none" aria-hidden="true">
                  <path d="M4 11V7q0-5 5-5t5 5v4" stroke="#8a8a8a" strokeWidth="2.400" />
                  <rect x="1" y="10.500" width="16" height="11" rx="1.500" fill="#626262" />
                </svg>
              </th>
              <th className="pl-[5px] font-normal">Item</th>
            </tr>
          </thead>
          <tbody>
            {[6, 5, 4, 3, 2, 1].map((n) => (
              <tr key={n}>
                <td className="pl-[5px] pt-1 leading-none">
                  <Check label={`Map ${n} visible`} on />
                </td>
                <td className="pl-[5px] pt-1 leading-none">
                  <Check label={`Map ${n} locked`} />
                </td>
                <td className={`pl-1.5 ${n === 2 ? "font-semibold text-black" : ""}`}>
                  <span className="flex items-center gap-2 leading-5">
                    <svg viewBox="0 0 20 20" className="mt-1 size-5" fill="none" aria-hidden="true">
                      <path d="M3.500 2.500h16v15h-14z" fill="url(#paper)" stroke="#a0a0a0" />
                      <path d="M1 2.500q1.500-1.500 3 0v13h-1.500q-1.500 0-1.500 2z" fill="#eee" stroke="#a0a0a0" />
                    </svg>
                    <span className="mb-1">Map {n}</span>
                  </span>
                </td>
              </tr>
            ))}
          </tbody>
        </table>
      </div>
    </section>
  );
}

function Group({ title, children }: Kids & { title: string }) {
  return (
    <section>
      <div className="flex h-[21px]">
        <button type="button" aria-expanded="true" className="flex items-center gap-2.5 pl-0.5 pr-2.5 font-bold">
          <svg viewBox="0 0 16 12" className="h-3 w-4" aria-hidden="true">
            <path d="M1 1h14l-7 10z" fill="#3c3c3c" stroke="#222" />
          </svg>
          {title}
        </button>
        <span className="h-[13px] flex-1 self-end border-r border-t border-[#dcdcdc]" />
      </div>
      <div className="border-x border-b border-[#dcdcdc] pl-3.5 pr-[17px]">{children}</div>
    </section>
  );
}

const field = "h-7 min-w-0 flex-1 border-2 border-[#7a7a7a] bg-white px-0.5";

const crsOptions = [
  "Use project CRS",
  "Project CRS: EPSG:4326 - WGS 84",
  "EPSG:54008 - World_Sinusoidal",
  "EPSG:102100 - WGS_...r_Auxiliary_Sphere",
  "EPSG:54018 - World_Winkel_I",
  "EPSG:53030 - Sphere_Robinson",
];

function PropertiesDock() {
  return (
    <section className="mt-[6px] flex min-h-0 flex-1 flex-col">
      <div role="tablist" className="flex h-7 shrink-0 items-end border-b border-[#a0a0a0] pl-[3px]">
        <Tab label="Layout" width="w-[73px]" />
        <Tab label="Item Properties" active width="w-[140px]" />
        <Tab label="Guides" width="w-[75px]" />
        <Tab label="Atlas" width="w-[64px]" />
      </div>
      <div className="mt-0.5 flex flex-col">
        <DockHeader title="Item Properties" />
      </div>
      <h3 className="mt-[3px] h-6 shrink-0 bg-[#c5c5c5] pl-[7px] pt-px font-bold">Map 2</h3>
      <div className="flex min-h-0 flex-1 border border-[#828790]">
        <div className="min-w-0 flex-1 overflow-hidden pl-[17px] pr-4 pt-4">
          <Group title="Main Properties">
            <button type="button" className="mt-3.5 h-7 w-full border-2 border-[#b4b4b4] bg-[#e1e1e1] leading-5">
              Update Preview
            </button>
            <div className="mt-3.5 flex items-center">
              <label htmlFor="scale" className="w-[93px] text-sm">Scale</label>
              <input id="scale" defaultValue="479988783" className={field} />
              <Override label="Scale override" />
            </div>
            <div className="mt-4 flex items-center">
              <label htmlFor="rot" className="w-[93px] whitespace-nowrap text-sm">Map rotation</label>
              <div className="flex h-7 min-w-0 flex-1 border-2 border-[#7a7a7a] bg-white">
                <input id="rot" defaultValue="0.00 °" className="min-w-0 flex-1 px-0.5" />
                <span className="m-px flex w-5 flex-col gap-px">
                  <button type="button" aria-label="Increase" className="grid flex-1 place-items-center border border-[#b4b4b4] bg-[#f0f0f0]">
                    <svg viewBox="0 0 8 5" className="h-[5px] w-2" aria-hidden="true"><path d="M0 5h8L4 0z" /></svg>
                  </button>
                  <button type="button" aria-label="Decrease" className="grid flex-1 place-items-center border border-[#b4b4b4] bg-[#f0f0f0]">
                    <svg viewBox="0 0 8 5" className="h-[5px] w-2" aria-hidden="true"><path d="M0 0h8L4 5z" /></svg>
                  </button>
                </span>
              </div>
              <Override label="Rotation override" />
            </div>
            <div className="relative mt-3 flex h-[30px] items-center">
              <label htmlFor="crs" className="w-[93px] shrink-0 pt-1 text-sm">CRS</label>
              <div className="relative h-full min-w-0 flex-1">
                <select id="crs" className="size-full appearance-none border-2 border-[#3a75b5] bg-[#cfe3f7] px-0.5 pt-0.5">
                  <option>Use project CRS</option>
                </select>
                <Chevron className="pointer-events-none absolute right-1.5 top-3 w-3 text-[#444]" />
                <ul role="listbox" aria-label="CRS options" className="absolute inset-x-0 top-7 z-10 border-2 border-[#8a8a8a] bg-white leading-[18px] shadow-[3px_3px_4px_#00000080]">
                  {crsOptions.map((o, i) => (
                    <li
                      key={o}
                      role="option"
                      aria-selected={i === 5}
                      className={`truncate px-0.5 ${i === 5 ? "bg-[#3277d3] text-white outline-1 -outline-offset-1 outline-dotted outline-[#e09a4a]" : ""}`}
                    >
                      {o}
                    </li>
                  ))}
                </ul>
              </div>
              <button type="button" aria-label="Select CRS" className="ml-2.5 grid h-7 w-[30px] shrink-0 place-items-center border border-[#b0b0b0] bg-[#e1e1e1]">
                <svg viewBox="0 0 24 24" className="size-6" fill="none" aria-hidden="true">
                  <path d="M6 11C6 4 9 1.500 13 1.500S21 4 21 11z" fill="#9a9a9a" stroke="#777" />
                  <path d="M13 2v9M7 7h13" stroke="#ddd" />
                  <circle cx="9" cy="15" r="7.500" fill="#a9cdf0" stroke="#88a9c8" />
                  <path d="M2 15h14M9 8v14" stroke="#e6f2fc" />
                  <rect x="12" y="12" width="11" height="11" rx="2" fill="#dcc24a" stroke="#b89b1c" />
                  <path d="M15 20l5-5" stroke="#fff" strokeWidth="2.200" />
                </svg>
              </button>
              <svg viewBox="0 0 450 56" preserveAspectRatio="none" className="pointer-events-none absolute -left-[17px] -top-4 z-20 h-14 w-[450px]" fill="none" aria-hidden="true">
                <ellipse cx="225" cy="28" rx="221" ry="24" stroke="#da352e" strokeWidth="7" />
              </svg>
            </div>
            <div className="mb-4 mt-[11px] flex h-5 items-center">
              <Check label="Draw map canvas items" on text />
            </div>
          </Group>
          <div className="h-2.5" />
          <Group title="Layers">
            <div className="mt-4 flex h-7 items-center">
              <Check label="Follow map theme" text />
              <div className="relative ml-auto h-7 w-[195px]">
                <select aria-label="Map theme" className="size-full appearance-none border-2 border-[#bdbdbd] bg-[#e1e1e1] px-0.5">
                  <option>(none)</option>
                </select>
                <Chevron className="pointer-events-none absolute right-1.5 top-3 w-3 text-[#555]" />
              </div>
              <Override label="Theme override" />
            </div>
            <div className="mt-4 flex h-7 items-center">
              <Check label="Lock layers" on text />
              <button type="button" aria-label="Set layer list from map theme" className="relative ml-auto grid h-7 w-[30px] place-items-center border border-[#b0b0b0] bg-[#e1e1e1]">
                <Eye iris="#7fa6d6" className="h-6 w-6" />
                <svg viewBox="0 0 8 5" className="absolute bottom-1 right-1 h-[5px] w-2" aria-hidden="true"><path d="M0 0h8L4 5z" /></svg>
              </button>
              <Override label="Lock layers override" />
            </div>
            <div className="mb-4 mt-3.5 flex h-5 items-center">
              <Check label="Lock styles for layers" text />
            </div>
          </Group>
          <div className="h-2.5" />
          <Group title="Extents">
            <div className="mt-[18px] flex items-center">
              <label htmlFor="xmin" className="w-[49px] text-sm">X min</label>
              <input id="xmin" defaultValue="-179.930" className={field} />
              <Override label="X min override" />
            </div>
            <div className="mt-4 flex items-center">
              <label htmlFor="ymin" className="w-[49px] text-sm">Y min</label>
              <input id="ymin" className={field} />
              <Override label="Y min override" />
            </div>
          </Group>
        </div>
        <div className="flex w-[22px] shrink-0 flex-col items-center border-l border-white">
          <button type="button" aria-label="Scroll up" className="grid h-6 place-items-center">
            <Chevron className="w-3 rotate-180 text-[#444]" />
          </button>
          <span className="h-[175px] w-full bg-[#cdcdcd]" />
          <span className="flex-1" />
          <button type="button" aria-label="Scroll down" className="grid h-6 place-items-center">
            <Chevron className="w-3 text-[#444]" />
          </button>
        </div>
      </div>
    </section>
  );
}

/* ---------- window ---------- */

export default function App() {
  return (
    <div className="flex h-screen flex-col overflow-hidden bg-white pb-[31px] pl-9 pr-7 pt-5 font-['Noto_Sans','Open_Sans',sans-serif] text-[15px] leading-5 text-[#1a1a1a]">
      <header className="flex h-[46px] shrink-0 items-center pl-1 pt-0.5 text-black">
        <svg viewBox="0 0 24 24" className="size-[23px]" fill="none" aria-hidden="true">
          <circle cx="11.500" cy="11.500" r="8.500" stroke="#74a83a" strokeWidth="5" />
          <path d="M12 12l4 1 7 8.500-2.500 1.500h-4z" fill="#5d8f2b" />
          <path d="M11 9.500l5 1-1 4.500-4.500-1z" fill="#ee7f2d" />
        </svg>
        <h1 className="ml-1.5 flex-1">*Projection</h1>
        <button type="button" aria-label="Minimize" className="grid w-[63px] place-items-center">
          <svg viewBox="0 0 16 16" className="size-4"><path d="M1 8h14" stroke="#111" strokeWidth="1.600" /></svg>
        </button>
        <button type="button" aria-label="Maximize" className="grid w-[63px] place-items-center">
          <svg viewBox="0 0 16 16" className="size-4" fill="none"><rect x="1.500" y="1.500" width="13" height="13" stroke="#111" strokeWidth="1.600" /></svg>
        </button>
        <button type="button" aria-label="Close" className="grid w-[63px] place-items-center">
          <svg viewBox="0 0 16 16" className="size-4"><path d="M1 1l14 14M15 1L1 15" stroke="#111" strokeWidth="1.500" /></svg>
        </button>
      </header>
      <nav className="flex h-7 shrink-0 items-center gap-5 pl-1 text-base text-black">
        {["Layout", "Edit", "View", "Items", "Add Item", "Atlas", "Settings"].map((m) => (
          <button key={m} type="button">{m}</button>
        ))}
      </nav>

      <div className="flex h-[47px] shrink-0 border-b-2 border-r border-[#c0c0c0] bg-[#f0f0f0] pt-0.5">
        <Grip />
        {fileTools.map((g, i) => (
          <div key={i} className="flex items-center">
            {i > 0 && <Sep />}
            {g.map((t) => (
              <Btn key={t.label} t={t} />
            ))}
          </div>
        ))}
        <span className="w-px shrink-0 bg-[#b0b0b0]" />
        <Grip wide />
        {atlasBefore.map((t) => <Btn key={t.label} t={t} />)}
        <label className="relative my-0.5 w-[86px] shrink-0 border-2 border-[#cfcfcf] bg-white p-0.5">
          <input aria-label="Feature" defaultValue="1" className="h-full w-[58px] bg-[#f0f0f0] px-1 text-[#7d8791]" />
          <Chevron className="absolute right-1.5 top-3.5 w-3 text-[#999]" />
        </label>
        {atlasAfter.map((t) => <Btn key={t.label} t={t} />)}
      </div>

      <div className="flex h-[46px] shrink-0 bg-[#f0f0f0] pt-0.5">
        <Grip />
        {zoomTools.map((t) => <Btn key={t.label} t={t} />)}
        <span className="ml-px w-px shrink-0 bg-[#b0b0b0]" />
        <Grip wide />
        {itemTools.map((t) => <Btn key={t.label} t={t} />)}
      </div>

      <main className="flex min-h-0 flex-1 bg-[#f0f0f0]">
        <div className="w-[41px] shrink-0 border-t border-[#c4c4c4]">
          <div className="mx-1 mt-1.5 h-0.5 bg-[repeating-linear-gradient(to_right,#b0b0b0_0_2px,transparent_2px_5px)]" />
          <div className="mt-[5px] grid h-[664px] auto-rows-fr">
            {sideTools.map((t, i) => (
              <button
                key={t.label}
                type="button"
                aria-label={t.label}
                title={t.label}
                className={`grid w-[39px] place-items-center pr-1 ${i === 2 ? "border border-[#99c4ee] bg-[#c5dcf3]" : ""}`}
              >
                <Ico>{t.art}</Ico>
              </button>
            ))}
          </div>
        </div>
        <div className="flex min-w-0 flex-1 flex-col border-b border-[#a0a0a0]">
          <TopRuler />
          <div className="flex min-h-0 flex-1">
            <SideRuler />
            <Canvas />
          </div>
        </div>
        <aside className="ml-1.5 flex w-[538px] shrink-0 flex-col border-t border-[#c4c4c4]">
          <ItemsDock />
          <PropertiesDock />
        </aside>
      </main>

      <footer className="relative flex h-[35px] shrink-0 items-center overflow-hidden bg-[#f0f0f0] pl-0.5 pt-0.5">
        <span className="flex-1">1 item selected</span>
        <span className="w-[147px]">x: 322.368 mm</span>
        <span className="w-[146px]">y: 126.078 mm</span>
        <span className="w-[147px]">page: 1</span>
        <div className="relative h-7 w-[145px]">
          <select aria-label="Zoom level" className="size-full appearance-none border-2 border-[#8a8a8a] bg-white px-1">
            <option>70.1%</option>
          </select>
          <Chevron className="pointer-events-none absolute right-1.5 top-3 w-3 text-[#444]" />
        </div>
        <input
          type="range"
          aria-label="Zoom"
          defaultValue={0}
          className="ml-4 mr-[27px] h-[30px] w-[130px] appearance-none bg-[linear-gradient(#d0d0d0,#d0d0d0)] bg-[length:100%_4px] bg-center bg-no-repeat [&::-webkit-slider-thumb]:h-[30px] [&::-webkit-slider-thumb]:w-3.5 [&::-webkit-slider-thumb]:appearance-none [&::-webkit-slider-thumb]:bg-[#3277d3]"
        />
        <span className="pointer-events-none absolute right-16 top-[11px] whitespace-nowrap text-[26px] leading-6 text-[#8a8a8a]/70">Activate Windows</span>
        <svg viewBox="0 0 12 12" className="absolute bottom-0 right-0.5 size-3" aria-hidden="true">
          <path d="M9 0h2v2h-2zM5 4h2v2h-2zM9 4h2v2h-2zM1 8h2v2h-2zM5 8h2v2h-2zM9 8h2v2h-2z" fill="#b0b0b0" />
        </svg>
      </footer>
    </div>
  );
}
